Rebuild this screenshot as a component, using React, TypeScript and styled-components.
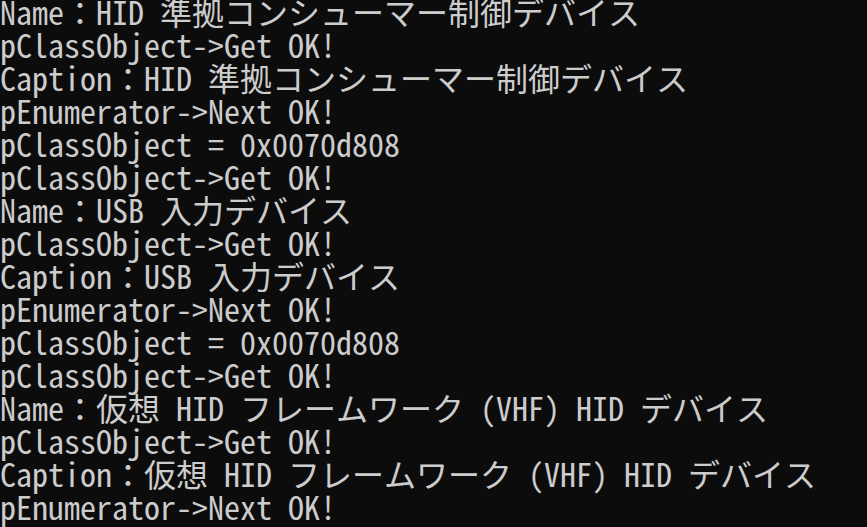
import styled, { createGlobalStyle } from "styled-components";

const GlobalStyle = createGlobalStyle`
  html, body {
    margin: 0;
    padding: 0;
    background: #0c0c0c;
  }
`;

const Console = styled.div`
  width: 867px;
  height: 527px;
  overflow: hidden;
  background: #0c0c0c;
  color: #cccccc;
  font-family: "Noto Sans Mono CJK JP", "Noto Sans CJK JP", "Liberation Mono", monospace;
  font-size: 32px;
  box-sizing: border-box;
`;

// row pitch is 33px; the shorter line box lifts the glyphs to sit like the console's
const Line = styled.div`
  height: 33px;
  line-height: 23px;
  white-space: pre;
`;

const lines = [
  "Name：HID 準拠コンシューマー制御デバイス",
  "pClassObject->Get OK!",
  "Caption：HID 準拠コンシューマー制御デバイス",
  "pEnumerator->Next OK!",
  "pClassObject = 0x0070d808",
  "pClassObject->Get OK!",
  "Name：USB 入力デバイス",
  "pClassObject->Get OK!",
  "Caption：USB 入力デバイス",
  "pEnumerator->Next OK!",
  "pClassObject = 0x0070d808",
  "pClassObject->Get OK!",
  "Name：仮想 HID フレームワーク (VHF) HID デバイス",
  "pClassObject->Get OK!",
  "Caption：仮想 HID フレームワーク (VHF) HID デバイス",
  "pEnumerator->Next OK!",
];

export default function App() {
  return (
    <>
      <GlobalStyle />
      <Console>
        {lines.map((text, i) => (
          <Line key={i}>{text}</Line>
        ))}
      </Console>
    </>
  );
}
